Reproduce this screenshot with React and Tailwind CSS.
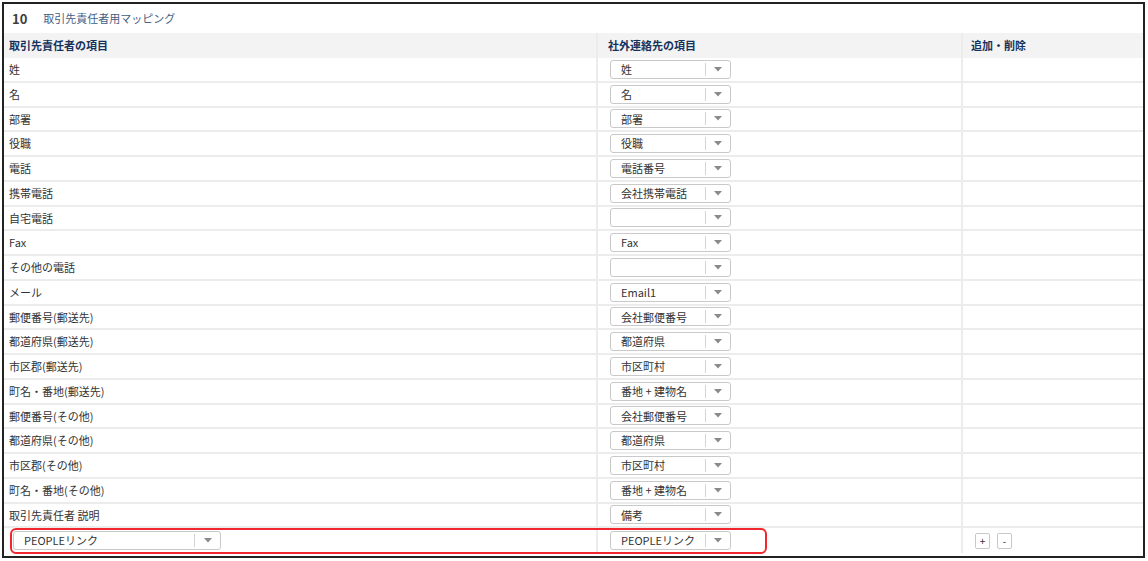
import { Fragment } from 'react';

const ROWS = [
  ['姓', '姓'],
  ['名', '名'],
  ['部署', '部署'],
  ['役職', '役職'],
  ['電話', '電話番号'],
  ['携帯電話', '会社携帯電話'],
  ['自宅電話', ''],
  ['Fax', 'Fax'],
  ['その他の電話', ''],
  ['メール', 'Email1'],
  ['郵便番号(郵送先)', '会社郵便番号'],
  ['都道府県(郵送先)', '都道府県'],
  ['市区郡(郵送先)', '市区町村'],
  ['町名・番地(郵送先)', '番地 + 建物名'],
  ['郵便番号(その他)', '会社郵便番号'],
  ['都道府県(その他)', '都道府県'],
  ['市区郡(その他)', '市区町村'],
  ['町名・番地(その他)', '番地 + 建物名'],
  ['取引先責任者 説明', '備考'],
];

function Caret() {
  return (
    <svg width="8" height="5" viewBox="0 0 8 5" className="block">
      <path d="M0 0 H8 L4 4.5 Z" fill="#8a8a8a" />
    </svg>
  );
}

function Select({ value, width = 'w-[121px]', split = 'w-[24px]' }) {
  return (
    <div className={`flex h-[19px] ${width} items-center rounded-[3px] border border-[#c9c9c9] bg-white`}>
      <span className="flex-1 truncate pl-[10px] text-[11px] text-[#333]">{value}</span>
      <span className="h-[13px] w-px bg-[#d4d4d4]" />
      <span className={`flex ${split} items-center justify-center`}>
        <Caret />
      </span>
    </div>
  );
}

const cell = 'flex h-[24.75px] items-center border-b-2 border-[#ececec]';

export default function App() {
  return (
    <div className="bg-white p-[2px]" style={{ fontFamily: '"Noto Sans CJK JP", "Liberation Sans", sans-serif' }}>
      <div className="h-[556px] w-[1143px] overflow-hidden border-2 border-[#222] bg-white">
        <div className="flex h-[29px] items-center gap-[16px] pl-[8px]">
          <span className="text-[13px] font-bold text-[#3e3e3c]">10</span>
          <span className="text-[11px] text-[#3f5e85]">取引先責任者用マッピング</span>
        </div>

        <div className="grid grid-cols-[594px_365px_1fr]">
          {/* header */}
          <div className="flex h-[25px] items-center border-r-2 border-[#ececec] bg-[#f3f3f3] pl-[5px] text-[11px] font-bold text-[#16325c]">
            取引先責任者の項目
          </div>
          <div className="flex h-[25px] items-center border-r-2 border-[#ececec] bg-[#f3f3f3] pl-[10px] text-[11px] font-bold text-[#16325c]">
            社外連絡先の項目
          </div>
          <div className="flex h-[25px] items-center bg-[#f3f3f3] pl-[8px] text-[11px] font-bold text-[#16325c]">
            追加・削除
          </div>

          {ROWS.map(([left, right]) => (
            <Fragment key={left}>
              <div className={`${cell} border-r-2 pl-[5px] text-[11px] text-[#333]`}>{left}</div>
              <div className={`${cell} border-r-2 pl-[12px]`}>
                <Select value={right} />
              </div>
              <div className={cell} />
            </Fragment>
          ))}

          {/* last row with red highlight */}
          <div className="relative col-span-3 grid h-[24.75px] grid-cols-[594px_365px_1fr]">
            <div className="flex items-center border-r-2 border-[#ececec] pl-[9px]">
              <Select value="PEOPLEリンク" width="w-[208px]" split="w-[25px]" />
            </div>
            <div className="flex items-center border-r-2 border-[#ececec] pl-[12px]">
              <Select value="PEOPLEリンク" />
            </div>
            <div className="flex items-center gap-[7px] pl-[12px]">
              <button className="flex h-[16px] w-[15px] items-center justify-center rounded-[2px] border border-[#c9c9c9] bg-white text-[10px] leading-none text-[#333]">+</button>
              <button className="flex h-[16px] w-[15px] items-center justify-center rounded-[2px] border border-[#c9c9c9] bg-white text-[10px] leading-none text-[#333]">-</button>
            </div>
            <div className="pointer-events-none absolute left-[6px] top-[0px] h-[26px] w-[757px] rounded-[6px] border-2 border-[#f0282d]" />
          </div>
        </div>
      </div>
    </div>
  );
}
